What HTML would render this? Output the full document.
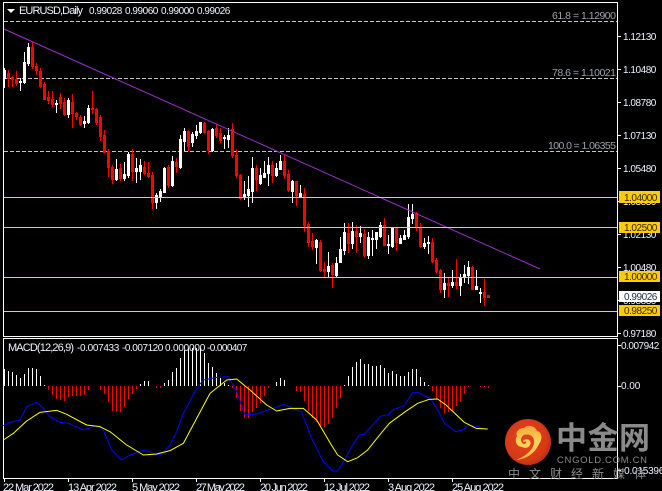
<!DOCTYPE html>
<html><head><meta charset="utf-8"><title>EURUSD Daily</title>
<style>
html,body{margin:0;padding:0;background:#000;width:662px;height:491px;overflow:hidden}
svg{display:block;position:absolute;left:0;top:0}
text{font-family:"Liberation Sans",sans-serif;font-size:10px;fill:#eef4ff;letter-spacing:-.35px}
.f{fill:#9aa4ad;font-size:10.5px;letter-spacing:0}
.b{fill:#332a00}
.t{letter-spacing:0;font-size:11px}
.cn{font-family:"Liberation Sans","Noto Sans CJK SC",sans-serif}
</style></head><body>
<svg width="662" height="491" viewBox="0 0 662 491" xmlns="http://www.w3.org/2000/svg">
<defs>
<radialGradient id="rg" cx=".45" cy=".45" r=".6"><stop offset="0" stop-color="#e2451c"/><stop offset=".75" stop-color="#d63a16"/><stop offset="1" stop-color="#b62c10"/></radialGradient>
<linearGradient id="yg" x1="0" y1="0" x2="0" y2="1"><stop offset="0" stop-color="#f9a63a"/><stop offset=".5" stop-color="#fbd55c"/><stop offset="1" stop-color="#f5b33a"/></linearGradient>
</defs>
<g shape-rendering="crispEdges">
<!-- frames -->
<path d="M3.5 2.5H617.5V336.5H3.5ZM3.5 338.5H617.5V478.5H3.5Z" fill="none" stroke="#fff"/>
<!-- ticks -->
<path d="M618 36.5h3M618 69.5h3M618 102.5h3M618 135.5h3M618 168.5h3M618 201.5h3M618 234.5h3M618 267.5h3M618 300.5h3M618 333.5h3M618 345.5h3M618 386.5h3M618 470.5h3M4.5 479v3M68.5 479v3M132.5 479v3M196.5 479v3M260.5 479v3M324.5 479v3M388.5 479v3M452.5 479v3" stroke="#fff" fill="none"/>
<!-- fib dashed -->
<path d="M4 21.5H617M4 78.5H617M4 151.5H617" stroke="#c4c4c4" stroke-dasharray="4 2" fill="none"/>
<!-- white candles wicks -->
<path fill="none" stroke="#fff" d="M4.5 68V88M20.5 78V91M24.5 52V84M28.5 43V66M56.5 100V113M68.5 98V118M84.5 116V128M88.5 105V124M116.5 159V181M124.5 162V181M128.5 152V178M136.5 158V183M140.5 159V180M156.5 193V209M160.5 189V202M164.5 167V193M172.5 156V187M180.5 135V169M184.5 128V151M192.5 132V147M196.5 125V139M200.5 122V134M212.5 128V152M224.5 135V149M228.5 128V148M244.5 181V200M248.5 176V207M252.5 157V203M260.5 168V185M264.5 161V178M268.5 157V186M276.5 163V177M280.5 155V170M292.5 180V203M300.5 185V197M316.5 239V264M328.5 252V278M336.5 257V277M340.5 237V263M344.5 223V255M352.5 222V249M360.5 226V243M368.5 232V259M372.5 230V256M376.5 232V249M380.5 222V238M388.5 235V254M392.5 227V248M400.5 235V244M404.5 230V240M408.5 204V239M412.5 204V224M424.5 238V249M428.5 236V254M444.5 273V298M452.5 270V288M460.5 274V296M464.5 265V283M468.5 261V284M476.5 270V290M480.5 288V303"/>
<!-- white bodies -->
<path fill="none" stroke="#fff" stroke-width="3" d="M4.5 70V79M20.5 81V83M24.5 62V83M28.5 47V64M56.5 103V105M68.5 100V115M84.5 121V124M88.5 108V123M116.5 169V180M124.5 174V179M128.5 154V176M136.5 168V172M140.5 165V172M156.5 195V203M160.5 191V198M164.5 168V193M172.5 161V186M180.5 139V168M184.5 131V142M192.5 134V143M196.5 131V136M200.5 122V133M212.5 129V151M224.5 137V139M228.5 135V140M244.5 194V198M248.5 189V196M252.5 168V192M260.5 175V184M264.5 173V178M268.5 165V174M276.5 168V176M280.5 161V170M292.5 181V192M300.5 193V197M316.5 240V248M328.5 266V272M336.5 263V276M340.5 249V263M344.5 232V251M352.5 231V244M360.5 233V237M368.5 237V256M372.5 238V240M376.5 232V240M380.5 225V237M388.5 244V246M392.5 228V247M400.5 238V244M404.5 235V240M408.5 217V237M412.5 214V219M424.5 243V247M428.5 242V244M444.5 283V290M452.5 282V286M460.5 277V286M464.5 274V278M468.5 267V276M476.5 286V290M480.5 292V294"/>
<!-- red wicks -->
<path fill="none" stroke="#ff0000" d="M8.5 70V87M12.5 76V87M16.5 71V86M32.5 42V69M36.5 63V75M40.5 68V88M44.5 82V100M48.5 91V104M52.5 91V107M60.5 93V109M64.5 98V116M72.5 94V128M76.5 112V120M80.5 115V126M92.5 91V114M96.5 108V125M100.5 115V141M104.5 130V153M108.5 149V177M112.5 165V184M120.5 164V181M132.5 149V181M144.5 161V175M148.5 162V178M152.5 172V209M168.5 165V188M176.5 158V173M188.5 130V151M204.5 122V134M208.5 130V154M216.5 124V138M220.5 128V143M232.5 123V158M236.5 149V178M240.5 174V200M256.5 165V191M272.5 161V183M284.5 155V179M288.5 170V192M296.5 181V206M304.5 188V232M308.5 222V247M312.5 233V250M320.5 240V272M324.5 262V278M332.5 263V288M348.5 223V253M356.5 225V253M364.5 229V257M384.5 218V246M396.5 228V251M416.5 212V231M420.5 223V248M432.5 238V263M436.5 258V273M440.5 269V293M448.5 278V297M456.5 259V289M472.5 266V290M484.5 279V306"/>
<!-- red bodies -->
<path fill="none" stroke="#ff0000" stroke-width="3" d="M8.5 73V79M12.5 77V80M16.5 79V84M32.5 47V67M36.5 66V71M40.5 71V87M44.5 84V100M48.5 97V101M52.5 99V105M60.5 97V104M64.5 102V115M72.5 102V114M76.5 113V117M80.5 117V125M92.5 108V110M96.5 109V123M100.5 117V137M104.5 135V153M108.5 151V168M112.5 167V180M120.5 168V179M132.5 154V172M144.5 167V174M148.5 173V177M152.5 175V203M168.5 167V186M176.5 162V167M188.5 131V147M204.5 123V133M208.5 131V151M216.5 128V136M220.5 133V141M232.5 129V156M236.5 155V176M240.5 175V199M256.5 168V180M272.5 165V176M284.5 161V176M288.5 174V191M296.5 181V196M304.5 194V226M308.5 224V243M312.5 241V247M320.5 242V271M324.5 269V272M332.5 265V275M348.5 233V244M356.5 231V237M364.5 234V256M384.5 225V246M396.5 228V243M416.5 213V228M420.5 227V247M432.5 242V262M436.5 260V272M440.5 270V290M448.5 283V286M456.5 282V286M472.5 267V290M484.5 292V298M487 296.5h3"/>
<!-- MACD histogram -->
<path fill="none" stroke="#fff" d="M4.5 386V369M8.5 386V371M12.5 386V372M16.5 386V375M20.5 386V378M24.5 386V374M28.5 386V368M32.5 386V368M36.5 386V369M40.5 386V376M44.5 386V385M140.5 386V384M144.5 386V381M148.5 386V381M164.5 386V383M168.5 386V380M172.5 386V372M176.5 386V368M180.5 386V358M184.5 386V350M188.5 386V348M192.5 386V348M196.5 386V348M200.5 386V348M204.5 386V353M208.5 386V363M212.5 386V367M216.5 386V373M220.5 386V378M224.5 386V383M228.5 386V385M276.5 386V382M280.5 386V378M284.5 386V380M348.5 386V376M344.5 386V385M352.5 386V367M356.5 386V362M360.5 386V359M364.5 386V364M368.5 386V364M372.5 386V366M376.5 386V366M380.5 386V365M384.5 386V368M388.5 386V373M392.5 386V371M396.5 386V374M400.5 386V376M404.5 386V376M408.5 386V372M412.5 386V369M416.5 386V369M420.5 386V377M424.5 386V382M428.5 386V385"/>
<path fill="none" stroke="#ff0000" d="M48.5 386V390M52.5 386V395M56.5 386V399M60.5 386V400M64.5 386V401M68.5 386V397M72.5 386V396M76.5 386V396M80.5 386V396M84.5 386V395M88.5 386V390M100.5 386V390M104.5 386V394M108.5 386V402M112.5 386V411M116.5 386V412M120.5 386V412M124.5 386V407M128.5 386V399M132.5 386V394M136.5 386V389M156.5 386V388M160.5 386V388M232.5 386V388M236.5 386V398M240.5 386V411M244.5 386V418M248.5 386V418M252.5 386V412M256.5 386V408M260.5 386V403M264.5 386V396M268.5 386V388M296.5 386V391M300.5 386V392M304.5 386V401M308.5 386V411M312.5 386V418M316.5 386V422M320.5 386V427M324.5 386V427M328.5 386V424M332.5 386V418M336.5 386V408M340.5 386V398M432.5 386V391M436.5 386V399M440.5 386V408M444.5 386V413M448.5 386V412M452.5 386V411M456.5 386V406M460.5 386V402M464.5 386V394M468.5 386V387M480.5 386V387M484.5 386V387M488.5 386V388"/>
</g>
<!-- trendline -->
<path d="M4 29L540 269" stroke="#9932cc" fill="none" stroke-width="1"/>
<g shape-rendering="crispEdges">
<!-- gold lines -->
<path d="M4 197.5H617M4 227.5H617M4 277.5H617M4 311.5H617" stroke="#ffd21e" fill="none"/>
</g>
<!-- MACD lines -->
<g transform="translate(0,335) scale(.33333)" fill="none" stroke-width="3" stroke-linejoin="round">
<path stroke="#0000ff" d="M10 272L30 262 60 255 80 215 110 202 130 220 150 245 180 262 205 265 250 285 290 272 310 285 335 345 365 375 390 360 430 345 450 350 465 360 485 358 510 330 530 290 550 235 590 160 610 135 650 127 685 125 710 170 735 240 770 237 820 220 850 208 880 220 905 232 935 310 970 380 993 403 998 408 1013 408 1028 385 1058 330 1078 300 1093 298 1143 243 1163 240 1178 225 1213 212 1238 172 1253 172 1293 192 1313 225 1333 265 1368 290 1388 285 1408 270 1433 275 1463 285"/>
<path stroke="#ffff00" d="M10 315L40 295 80 258 120 232 170 226 200 238 260 270 300 275 330 290 380 330 430 360 470 357 510 347 550 325 590 250 630 175 680 135 710 132 750 165 800 210 830 228 870 220 910 220 950 255 993 328 1013 360 1043 380 1073 368 1103 345 1143 295 1168 265 1213 232 1253 205 1288 193 1313 192 1338 210 1393 262 1428 280 1463 282"/>
</g>
<!-- header -->
<path d="M7 9h8l-4 4z" fill="#fff"/>
<text x="19" y="14" class="t" textLength="64">EURUSD,Daily</text>
<text x="89" y="14" textLength="33">0.99028</text>
<text x="125" y="14" textLength="33">0.99060</text>
<text x="161" y="14" textLength="33">0.99000</text>
<text x="197" y="14" textLength="33">0.99026</text>
<!-- fib labels -->
<text x="552" y="19" class="f" textLength="64">61.8 = 1.12900</text>
<text x="552" y="76" class="f" textLength="64">78.6 = 1.10021</text>
<text x="548" y="149" class="f" textLength="68">100.0 = 1.06355</text>
<!-- price axis -->
<text x="623" y="40" textLength="33">1.12130</text>
<text x="623" y="73" textLength="33">1.10480</text>
<text x="623" y="106" textLength="33">1.08780</text>
<text x="623" y="139" textLength="33">1.07130</text>
<text x="623" y="172" textLength="33">1.05480</text>
<text x="623" y="205" textLength="33">1.03830</text>
<text x="623" y="238" textLength="33">1.02130</text>
<text x="623" y="271" textLength="33">1.00480</text>
<text x="623" y="304" textLength="33">0.98830</text>
<text x="623" y="337" textLength="33">0.97180</text>
<!-- badges -->
<g shape-rendering="crispEdges" fill="#ffcc00">
<rect x="619" y="191" width="41" height="12"/>
<rect x="619" y="222" width="41" height="11"/>
<rect x="619" y="271" width="41" height="11"/>
<rect x="619" y="305" width="41" height="11"/>
<rect x="619" y="291" width="41" height="11" fill="#fff"/>
</g>
<text x="624" y="201" class="b" textLength="33">1.04000</text>
<text x="624" y="231" class="b" textLength="33">1.02500</text>
<text x="624" y="280" class="b" textLength="33">1.00000</text>
<text x="624" y="300" class="b" style="fill:#1a2a44" textLength="33">0.99026</text>
<text x="624" y="314" class="b" textLength="33">0.98250</text>
<!-- MACD text -->
<text x="8" y="351" class="t" textLength="66">MACD(12,26,9)</text>
<text x="77" y="351" textLength="42">-0.007433</text>
<text x="122" y="351" textLength="41">-0.007120</text>
<text x="165" y="351" textLength="40">0.000000</text>
<text x="207" y="351" textLength="40">-0.000407</text>
<text x="621" y="349" textLength="38">0.007942</text>
<text x="621" y="389" textLength="19">0.00</text>
<text x="621" y="474" textLength="43">-0.015396</text>
<!-- time axis -->
<text x="3" y="491" class="t" textLength="51">22 Mar 2022</text>
<text x="68" y="491" class="t" textLength="49">13 Apr 2022</text>
<text x="132" y="491" class="t" textLength="48">5 May 2022</text>
<text x="196" y="491" class="t" textLength="49">27 May 2022</text>
<text x="260" y="491" class="t" textLength="48">20 Jun 2022</text>
<text x="324" y="491" class="t" textLength="46">12 Jul 2022</text>
<text x="388" y="491" class="t" textLength="47">3 Aug 2022</text>
<text x="452" y="491" class="t" textLength="52">25 Aug 2022</text>
<!-- watermark -->
<circle cx="528" cy="442" r="23" fill="url(#rg)"/>
<path d="M516 460C527 459 535 453 539 444C543 439 542 432 537 431C535 426 528 424 524 428C519 428 515 432 517 436C514 441 517 447 522 447C528 450 532 445 530 441C528 438 523 439 523 442C527 440 527 444 524 444C520 443 520 437 524 435C530 433 535 437 534 443C533 450 526 456 516 460Z" fill="url(#yg)"/>
<text x="556" y="449" class="cn" style="font-size:31px;font-weight:700;fill:#8a8a8a;letter-spacing:0" textLength="94">中金网</text>
<text x="557" y="463" style="font-size:9.5px;fill:#8a8a8a;letter-spacing:0" textLength="90">CNGOLD.COM.CN</text>
<text x="508" y="478" class="cn" style="font-size:12px;fill:#8c8c8c;letter-spacing:0" textLength="138">中 文 财 经 新 媒 体</text>
</svg>
</body></html>
